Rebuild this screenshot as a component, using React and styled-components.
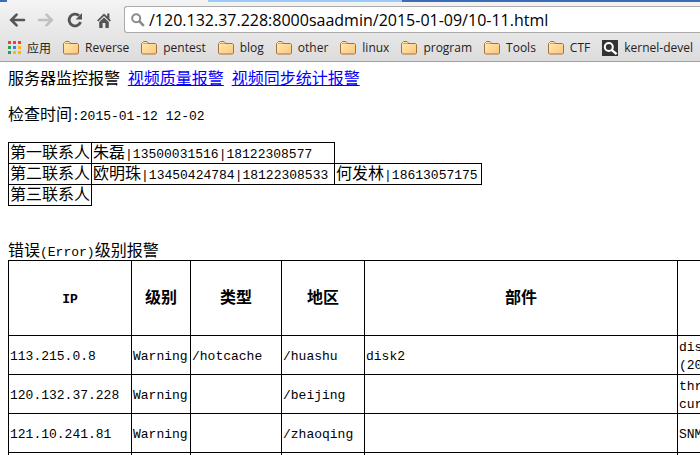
import React, { useState } from "react";
import styled, { createGlobalStyle } from "styled-components";

const bookmarks = ["Reverse", "pentest", "blog", "other", "linux", "program", "Tools", "CTF"];

const contactWidths = [83, 243, 147];

const contacts = [
  ["第一联系人", "朱磊|13500031516|18122308577"],
  ["第二联系人", "欧明珠|13450424784|18122308533", "何发林|18613057175"],
  ["第三联系人"],
];

const columns = [
  { title: "IP", width: 123 },
  { title: "级别", width: 59 },
  { title: "类型", width: 91 },
  { title: "地区", width: 83 },
  { title: "部件", width: 313 },
  { title: "", width: 313 },
];

const alarms = [
  ["113.215.0.8", "Warning", "/hotcache", "/huashu", "disk2", "disk\n(20"],
  ["120.132.37.228", "Warning", "", "/beijing", "", "threads\ncurrent"],
  ["121.10.241.81", "Warning", "", "/zhaoqing", "", "SNMP"],
  ["", "", "", "", "", ""],
];

// Latin runs are set in a monospaced face, half as wide as a Chinese character
const Mixed = ({ text }) =>
  text
    .split(/([\x20-\x7e]+)/)
    .map((part, i) => (i % 2 ? <Latin key={i}>{part}</Latin> : part));

const BackIcon = () => (
  <svg width="18" height="18" viewBox="0 0 18 18" fill="none" stroke="currentColor" strokeWidth="2.6">
    <path d="M8.6 3.6 3.2 9l5.4 5.4M3.4 9H16" strokeLinecap="round" />
  </svg>
);

const ForwardIcon = () => (
  <svg width="18" height="18" viewBox="0 0 18 18" fill="none" stroke="currentColor" strokeWidth="2.6">
    <path d="M9.4 3.6 14.8 9l-5.4 5.4M14.6 9H2" strokeLinecap="round" />
  </svg>
);

const ReloadIcon = () => (
  <svg width="18" height="18" viewBox="0 0 18 18">
    <path d="M13 4.6A5.9 5.9 0 1 0 14.6 11" fill="none" stroke="currentColor" strokeWidth="2.8" />
    <path d="M16 2v6.4H9.6z" fill="currentColor" />
  </svg>
);

const HomeIcon = () => (
  <svg width="18" height="18" viewBox="0 0 18 18" fill="currentColor">
    <path d="M9 2.4 2 9.4l1.4 1.2L9 5l5.6 5.6L16 9.4l-1.6-1.7V2.6h-2.2v2.8z" />
    <path d="M4.2 11 9 6.4l4.8 4.6v6H10.4v-5H7.6v5H4.2z" />
  </svg>
);

const SearchIcon = () => (
  <svg width="14" height="14" viewBox="0 0 14 14" fill="none" stroke="#8a8a8a" strokeWidth="2">
    <circle cx="5.2" cy="5.2" r="4" />
    <path d="m8.2 8.2 4.6 4.6" strokeWidth="2.6" />
  </svg>
);

const AppsIcon = () => (
  <svg width="13" height="13" viewBox="0 0 13 13">
    <path d="M0 0h3v3H0zM5 0h3v3H5zM10 0h3v3h-3z" fill="#ef4035" />
    <path d="M0 5h3v3H0zM0 10h3v3H0z" fill="#1ea15a" />
    <path d="M5 5h3v3H5z" fill="#3b7ded" />
    <path d="M10 5h3v3h-3zM5 10h3v3H5zM10 10h3v3h-3z" fill="#fbb814" />
  </svg>
);

const FolderIcon = () => (
  <svg width="16" height="14" viewBox="0 0 16 14">
    <defs>
      <linearGradient id="folder" x2="1" y2="1">
        <stop offset="0" stopColor="#ffeab8" />
        <stop offset="1" stopColor="#fbc777" />
      </linearGradient>
    </defs>
    <path
      d="M.5 12V2.5l1-1V1.5l1-1h3.5l1 1v1h7.5l1 1V12l-1 1h-13z"
      fill="url(#folder)"
      stroke="#a9713a"
    />
    <path d="M2 2.5h5" stroke="#d8a060" />
  </svg>
);

const KernelIcon = () => (
  <svg width="16" height="16" viewBox="0 0 16 16">
    <path d="M0 0h16v16H0z" fill="#333" />
    <circle cx="6.8" cy="7" r="4" fill="none" stroke="#fff" strokeWidth="2" />
    <path d="m9.6 9.8 5 4.4" stroke="#fff" strokeWidth="2.4" />
  </svg>
);

const App = () => {
  const [url, setUrl] = useState("/120.132.37.228:8000saadmin/2015-01-09/10-11.html");

  return (
    <>
      <GlobalStyle />
      <Browser>
        <TabStrip>
          <ActiveTab />
          <Tab />
        </TabStrip>
        <Toolbar>
          <NavButton aria-label="Back"><BackIcon /></NavButton>
          <NavButton aria-label="Forward" disabled><ForwardIcon /></NavButton>
          <NavButton aria-label="Reload"><ReloadIcon /></NavButton>
          <NavButton aria-label="Home"><HomeIcon /></NavButton>
          <AddressBar>
            <SearchIcon />
            <AddressInput
              aria-label="Address"
              value={url}
              onChange={(e) => setUrl(e.target.value)}
            />
          </AddressBar>
        </Toolbar>
        <BookmarkBar>
          <Bookmark href="#"><AppsIcon />应用</Bookmark>
          {bookmarks.map((name) => (
            <Bookmark href="#" key={name}><FolderIcon />{name}</Bookmark>
          ))}
          <Bookmark href="#"><KernelIcon />kernel-devel</Bookmark>
        </BookmarkBar>
      </Browser>
      <Page>
        <Line>
          服务器监控报警<Latin> </Latin>
          <a href="#">视频质量报警</a><Latin> </Latin>
          <a href="#">视频同步统计报警</a>
        </Line>
        <Line><Mixed text="检查时间:2015-01-12 12-02" /></Line>
        <Table>
          <colgroup>
            {contactWidths.map((width) => (
              <Column key={width} $width={width} />
            ))}
          </colgroup>
          <tbody>
            {contacts.map((row) => (
              <tr key={row[0]}>
                {row.map((cell) => (
                  <Cell key={cell}><Mixed text={cell} /></Cell>
                ))}
              </tr>
            ))}
          </tbody>
        </Table>
        <AlarmTable>
          <Caption><Mixed text="错误(Error)级别报警" /></Caption>
          <colgroup>
            {columns.map((col, i) => (
              <Column key={i} $width={col.width} />
            ))}
          </colgroup>
          <thead>
            <tr>
              {columns.map((col, i) => (
                <HeadCell key={i}><Mixed text={col.title} /></HeadCell>
              ))}
            </tr>
          </thead>
          <tbody>
            {alarms.map((row, i) => (
              <AlarmRow key={i}>
                {row.map((cell, j) => (
                  <Cell key={j}>
                    {cell.split("\n").map((line) => (
                      <div key={line}><Mixed text={line} /></div>
                    ))}
                  </Cell>
                ))}
              </AlarmRow>
            ))}
          </tbody>
        </AlarmTable>
      </Page>
    </>
  );
};

export default App;

const GlobalStyle = createGlobalStyle`
  * {
    box-sizing: border-box;
  }
  html {
    overflow: hidden;
  }
  body {
    margin: 0;
    background: #fff;
    color: #000;
  }
`;

const Browser = styled.header`
  font-family: "Open Sans", "Noto Sans CJK SC", sans-serif;
  border-bottom: 1px solid #a0a0a0;
  background: linear-gradient(#f4f4f4, #dcdcdc);
`;

const TabStrip = styled.div`
  display: flex;
  height: 2px;
  padding-left: 7px;
  background: #3a6cb8;
`;

const ActiveTab = styled.div`
  width: 201px;
  background: #f4f4f4;
`;

const Tab = styled.div`
  width: 194px;
  background: #9ccaf8;
`;

const Toolbar = styled.div`
  display: flex;
  align-items: center;
  gap: 11px;
  padding: 4px 0 1px 8px;
`;

const NavButton = styled.button`
  display: flex;
  padding: 0;
  border: none;
  background: none;
  color: #555;
  &:disabled {
    color: #c0c0c0;
  }
`;

const AddressBar = styled.div`
  flex: 1;
  display: flex;
  align-items: center;
  gap: 4px;
  height: 27px;
  padding-left: 6px;
  border: 1px solid #aaa;
  border-right: none;
  border-radius: 3px 0 0 3px;
  background: #fff;
`;

const AddressInput = styled.input`
  flex: 1;
  min-width: 0;
  padding: 0;
  border: none;
  background: none;
  color: #000;
  font: 16px "Open Sans", sans-serif;
  &:focus {
    outline: none;
  }
`;

const BookmarkBar = styled.nav`
  display: flex;
  gap: 12px;
  height: 27px;
  padding-left: 8px;
  overflow: hidden;
`;

const Bookmark = styled.a`
  display: flex;
  flex-shrink: 0;
  align-items: center;
  gap: 6px;
  color: #222;
  font-size: 12px;
  text-decoration: none;
`;

const Page = styled.main`
  padding: 8px;
  overflow: hidden;
  font: 16px/18px "Liberation Serif", "Noto Sans CJK SC", serif;
`;

const Line = styled.p`
  margin: 0 0 18px;
  a {
    color: #00f;
  }
`;

const Latin = styled.span`
  font-family: "Liberation Mono", monospace;
  font-size: 13px;
  line-height: 1;
`;

const Table = styled.table`
  border-collapse: collapse;
`;

const AlarmTable = styled(Table)`
  table-layout: fixed;
  width: 983px;
  margin-top: 36px;
`;

const Caption = styled.caption`
  text-align: left;
`;

const Column = styled.col`
  width: ${(props) => props.$width}px;
`;

const Cell = styled.td`
  padding: 1px;
  border: 1px solid #000;
  white-space: nowrap;
`;

const HeadCell = styled.th`
  height: 75px;
  padding: 1px;
  border: 1px solid #000;
`;

const AlarmRow = styled.tr`
  height: 39px;
`;
